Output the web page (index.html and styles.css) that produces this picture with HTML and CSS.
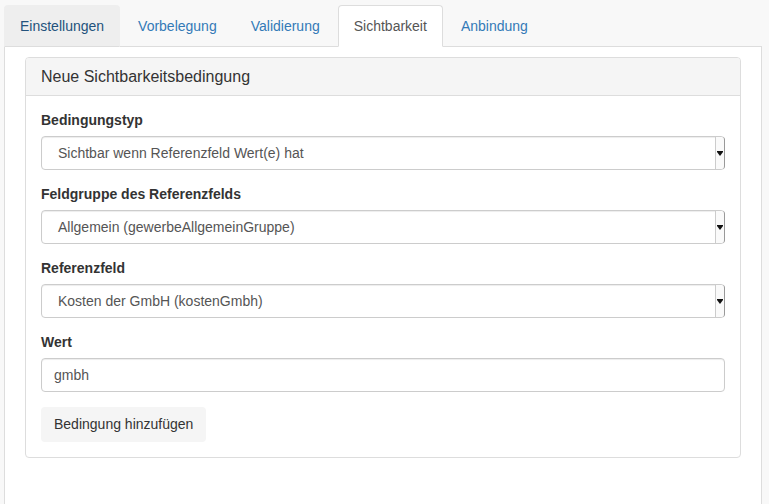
FILE: index.html
```html
<!DOCTYPE html>
<html lang="de">
<head>
<meta charset="utf-8">
<link rel="stylesheet" href="styles.css">
</head>
<body>
<div class="wrap">
  <ul class="tabs">
    <li class="tab hover">Einstellungen</li>
    <li class="tab">Vorbelegung</li>
    <li class="tab">Validierung</li>
    <li class="tab active">Sichtbarkeit</li>
    <li class="tab">Anbindung</li>
  </ul>
  <div class="pane">
    <div class="panel">
      <div class="panel-heading">Neue Sichtbarkeitsbedingung</div>
      <div class="panel-body">
        <div class="group">
          <div class="label">Bedingungstyp</div>
          <div class="select"><span class="val">Sichtbar wenn Referenzfeld Wert(e) hat</span><span class="arrow"></span></div>
        </div>
        <div class="group">
          <div class="label">Feldgruppe des Referenzfelds</div>
          <div class="select"><span class="val">Allgemein (gewerbeAllgemeinGruppe)</span><span class="arrow"></span></div>
        </div>
        <div class="group">
          <div class="label">Referenzfeld</div>
          <div class="select"><span class="val">Kosten der GmbH (kostenGmbh)</span><span class="arrow"></span></div>
        </div>
        <div class="group">
          <div class="label">Wert</div>
          <div class="input">gmbh</div>
        </div>
        <div class="btn">Bedingung hinzufügen</div>
      </div>
    </div>
  </div>
</div>
</body>
</html>
```
FILE: styles.css
```css
* { box-sizing: border-box; }
html, body { margin: 0; padding: 0; }
body {
  background: #f8f8f8;
  font-family: "Liberation Sans", Arial, sans-serif;
  font-size: 14px;
  line-height: 20px;
  color: #333;
}
.wrap {
  padding: 5px 7px 0 4px;
  height: 504px;
  display: flex;
  flex-direction: column;
}
.tabs {
  list-style: none;
  margin: 0;
  padding: 0;
  display: flex;
  position: relative;
  z-index: 1;
  margin-bottom: -1px;
}
.tab {
  padding: 10px 15px;
  margin-right: 2px;
  border: 1px solid transparent;
  border-radius: 4px 4px 0 0;
  color: #337ab7;
  line-height: 20px;
}
.tab.hover {
  background: #eee;
  border-color: #eee #eee #ddd;
  color: #23527c;
}
.tab.active {
  background: #fff;
  border-color: #ddd #ddd #fff;
  color: #555;
}
.pane {
  flex: 1;
  background: #fff;
  border: 1px solid #ddd;
  border-bottom: none;
  padding: 10px 20px;
}
.panel {
  border: 1px solid #ddd;
  border-radius: 4px;
  background: #fff;
}
.panel-heading {
  background: #f5f5f5;
  border-bottom: 1px solid #ddd;
  border-radius: 3px 3px 0 0;
  padding: 9px 15px 9px;
  font-size: 16px;
  line-height: 19px;
  color: #333;
}
.panel-body {
  padding: 15px;
  display: flex;
  flex-direction: column;
  align-items: flex-start;
}
.group {
  width: 100%;
  margin-bottom: 15px;
}
.label {
  font-weight: bold;
  margin-top: -1px;
  margin-bottom: 6px;
}
.select, .input {
  height: 34px;
  border: 1px solid #ccc;
  border-radius: 4px;
  box-shadow: inset 0 1px 1px rgba(0,0,0,.075);
  color: #555;
  display: flex;
  align-items: center;
}
.select { padding-left: 16px; justify-content: space-between; }
.input { padding-left: 12px; }
.arrow {
  width: 10px;
  height: 32px;
  border-left: 1px solid #ccc;
  border-right: 1px solid #999;
  border-radius: 0 3px 3px 0;
  background: #fafafa;
  position: relative;
  margin-right: -1px;
}
.arrow::after {
  content: "";
  position: absolute;
  left: 1px;
  top: 15px;
  border-left: 3px solid transparent;
  border-right: 3px solid transparent;
  border-top: 4px solid #111;
}
.arrow::before {
  content: "";
  position: absolute;
  left: 1px;
  top: 14px;
  width: 6px;
  height: 1px;
  background: #111;
}
.btn {
  background: #f5f5f5;
  border-radius: 4px;
  padding: 7px 13px 8px;
  color: #333;
}
```
